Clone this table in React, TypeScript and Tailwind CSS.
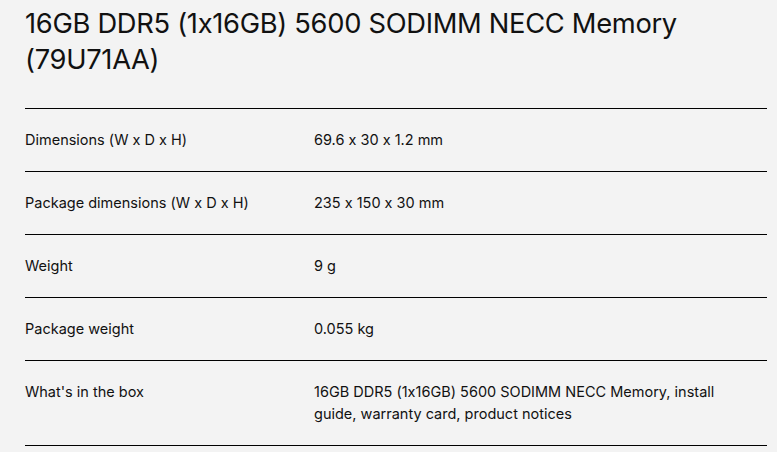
const rows: [string, string][] = [
  ["Dimensions (W x D x H)", "69.6 x 30 x 1.2 mm"],
  ["Package dimensions (W x D x H)", "235 x 150 x 30 mm"],
  ["Weight", "9 g"],
  ["Package weight", "0.055 kg"],
  ["What's in the box", "16GB DDR5 (1x16GB) 5600 SODIMM NECC Memory, install guide, warranty card, product notices"],
];

export default function App() {
  return (
    <div className="min-h-[452px] bg-[#f3f3f3] pl-[25px] pr-[10px] pt-[6px] text-[#111] font-['Inter',sans-serif] [font-feature-settings:'calt'_0]">
      <h1 className="text-[27.3px] leading-[36px] font-normal tracking-[-0.3px] w-[690px]">
        16GB DDR5 (1x16GB) 5600 SODIMM NECC Memory (79U71AA)
      </h1>
      <div className="mt-[30px] border-t border-black">
        {rows.map(([k, v]) => (
          <div key={k} className="flex border-b border-black py-[20px] text-[14.5px] leading-[22px]">
            <div className="w-[289px] shrink-0">{k}</div>
            <div className="w-[440px]">{v}</div>
          </div>
        ))}
      </div>
    </div>
  );
}
